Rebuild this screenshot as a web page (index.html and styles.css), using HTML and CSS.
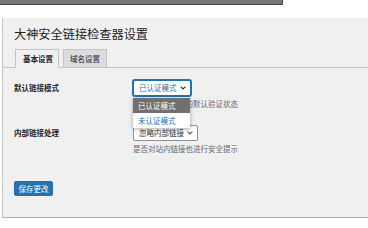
FILE: index.html
```html
<!DOCTYPE html>
<html lang="zh-CN">
<head>
<meta charset="utf-8">
<title>大神安全链接检查器设置</title>
<link rel="stylesheet" href="styles.css">
</head>
<body>
<div class="topbar"></div>
<div class="panel">
  <h1 class="title">大神安全链接检查器设置</h1>
  <div class="tabs">
    <span class="tab active">基本设置</span>
    <span class="tab">域名设置</span>
  </div>
  <div class="form">
    <div class="label">默认链接模式</div>
    <div class="field">
      <div class="select-wrap">
        <div class="select focus"><span>已认证模式</span><svg class="chev" viewBox="0 0 6 4" width="6" height="4"><polyline points="0.6,0.6 3,3 5.4,0.6" fill="none" stroke="currentColor" stroke-width="1.1"/></svg></div>
        <div class="dropdown">
          <div class="opt sel">已认证模式</div>
          <div class="opt">未认证模式</div>
        </div>
      </div>
      <p class="desc">外部链接所使用的默认验证状态</p>
    </div>
    <div class="label">内部链接处理</div>
    <div class="field">
      <div class="select"><span>忽略内部链接</span><svg class="chev" viewBox="0 0 6 4" width="6" height="4"><polyline points="0.6,0.6 3,3 5.4,0.6" fill="none" stroke="currentColor" stroke-width="1.1"/></svg></div>
      <p class="desc">是否对站内链接也进行安全提示</p>
    </div>
  </div>
  <button class="btn">保存更改</button>
</div>
</body>
</html>
```
FILE: styles.css
```css
body {
  margin: 0;
  background: #fff;
  font-family: "Noto Sans CJK SC", "Noto Sans", sans-serif;
  color: #1d2327;
}
.topbar {
  width: 282px;
  height: 4px;
  background: #787878;
  border-right: 1px solid #4a4a4a;
  border-bottom: 1px solid #4a4a4a;
}
.panel {
  margin: 13px 0 0 2px;
  background: #f0f0f0;
  border-left: 1px solid #c3c4c7;
  border-bottom: 1px solid #a7aaad;
  padding: 8px 0 21px 11px;
}
.title {
  margin: 0;
  font-size: 12.2px;
  font-weight: 400;
  line-height: 16px;
  color: #1d2327;
}
.tabs {
  margin: 7px 0 0 -11px;
  padding-left: 12px;
  display: flex;
  gap: 4px;
  height: 18px;
  border-bottom: 1px solid #c3c4c7;
}
.tab {
  box-sizing: border-box;
  height: 19px;
  margin-bottom: -1px;
  padding: 0 6px;
  border: 1px solid #c3c4c7;
  background: #dcdcde;
  color: #50575e;
  font-size: 7.5px;
  font-weight: 700;
  line-height: 17px;
}
.tab.active {
  background: #f0f0f0;
  color: #1d2327;
  border-bottom-color: #f0f0f0;
  padding: 0 5px 0 7px;
}
.form {
  display: grid;
  grid-template-columns: 119px 1fr;
  row-gap: 16px;
  padding-top: 12px;
}
.label {
  font-size: 7.5px;
  font-weight: 700;
  line-height: 16px;
  color: #1d2327;
}
.field {
  display: flex;
  flex-direction: column;
  align-items: flex-start;
}
.select-wrap {
  position: relative;
}
.select {
  box-sizing: border-box;
  height: 16px;
  display: flex;
  align-items: center;
  gap: 3px;
  padding: 0 4px 0 5px;
  background: #fff;
  border: 1px solid #8c8f94;
  border-radius: 2px;
  font-size: 7.5px;
  line-height: 14px;
  color: #2c3338;
}
.select .chev {
  color: #50575e;
  flex: none;
}
.select.focus {
  border-color: #2271b1;
  box-shadow: 0 0 0 1px #2271b1;
  color: #2271b1;
}
.select.focus .chev {
  color: #2c3338;
}
.dropdown {
  position: absolute;
  top: 18px;
  left: 0;
  width: 57px;
  background: #fff;
  box-shadow: 0 1px 4px rgba(0, 0, 0, 0.35);
}
.opt {
  height: 15px;
  line-height: 15px;
  padding-left: 5px;
  font-size: 7.5px;
  color: #2271b1;
}
.opt.sel {
  background: #707070;
  color: #fff;
}
.desc {
  margin: 3px 0 0;
  font-size: 7.5px;
  line-height: 10px;
  color: #646970;
}
.btn {
  display: block;
  margin-top: 27px;
  box-sizing: border-box;
  height: 15px;
  padding: 0 3.5px;
  background: #2271b1;
  border: 1px solid #2271b1;
  border-radius: 2px;
  color: #fff;
  font-family: inherit;
  font-size: 7.5px;
  line-height: 13px;
}
```
